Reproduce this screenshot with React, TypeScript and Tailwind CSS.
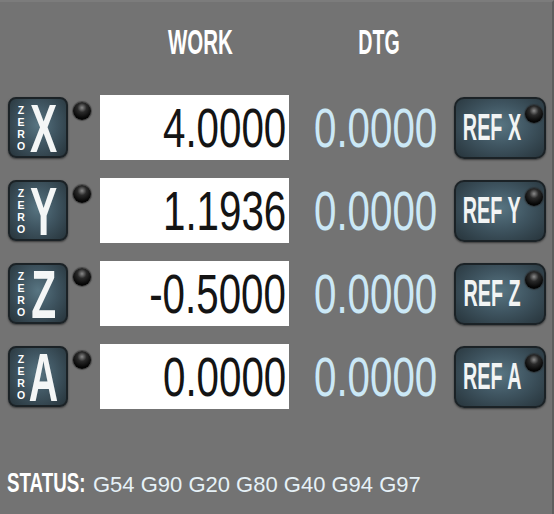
import React from 'react'

/** DRO panel — work / distance-to-go readout per axis */

const axes = [
  { axis: 'X', work: '4.0000', dtg: '0.0000' },
  { axis: 'Y', work: '1.1936', dtg: '0.0000' },
  { axis: 'Z', work: '-0.5000', dtg: '0.0000' },
  { axis: 'A', work: '0.0000', dtg: '0.0000' },
]

const narrow = "font-['Liberation_Sans',Arial,sans-serif] font-bold"
const btnBg =
  'bg-[radial-gradient(ellipse_at_50%_45%,#587582_0%,#405662_45%,#27343b_100%)] border-2 border-[#1b2226] shadow-[0_1px_2px_rgba(0,0,0,0.5)]'

function Led() {
  return (
    <div className="w-[18px] h-[18px] rounded-full bg-[radial-gradient(circle_at_50%_32%,#8a8a8a_0%,#2a2a2a_30%,#050505_70%)] shadow-[0_0_1px_1px_rgba(40,40,40,0.6)]" />
  )
}

function ZeroButton({ axis }: { axis: string }) {
  return (
    <div className={`w-[60px] h-[61px] rounded-[8px] ${btnBg} flex items-center`}>
      <div className={`flex flex-col items-center w-[10px] ml-[6px] text-[10.5px] leading-[12px] text-white ${narrow}`}>
        {'ZERO'.split('').map((c) => (
          <span key={c} className="block h-[12px]">
            {c}
          </span>
        ))}
      </div>
      <div className="w-[36px] flex justify-center">
        <span className={`inline-block text-[68px] leading-none text-[#f4f6f6] scale-x-[0.6] ${narrow}`}>{axis}</span>
      </div>
    </div>
  )
}

function RefButton({ axis }: { axis: string }) {
  return (
    <div className={`w-[92px] h-[62px] rounded-[10px] ${btnBg} flex items-center`}>
      <div className="w-[70px] flex justify-center pl-[2px]">
        <span className={`inline-block whitespace-nowrap text-[36px] leading-none text-[#f2f4f4] scale-x-[0.55] ${narrow}`}>
          REF {axis}
        </span>
      </div>
      <div className="self-start mt-[6px] ml-[-1px]">
        <Led />
      </div>
    </div>
  )
}

export default function App() {
  return (
    <div className="w-[554px] h-[514px] bg-[#737373] border-t-2 border-t-[#7c7c7c] border-r-2 border-r-[#5e5e5e] flex flex-col font-['Liberation_Sans',Arial,sans-serif]">
      <div className="h-[79px] flex items-center">
        <div className="ml-[100px] w-[201px] flex justify-center">
          <span className={`inline-block text-[35px] leading-none text-white scale-x-[0.585] ${narrow}`}>WORK</span>
        </div>
        <div className="w-[155px] flex justify-center">
          <span className={`inline-block text-[35px] leading-none text-white scale-x-[0.56] ${narrow}`}>DTG</span>
        </div>
      </div>

      <div className="mt-[14px] flex flex-col gap-[18px]">
        {axes.map((a) => (
          <div key={a.axis} className="flex pl-[8px] h-[65px]">
            <div className="mt-[2px]">
              <ZeroButton axis={a.axis} />
            </div>
            <div className="ml-[5px] mt-[7px]">
              <Led />
            </div>
            <div className="ml-[9px] w-[189px] h-[65px] bg-white flex items-center justify-end pr-[3px]">
              <span className="inline-block origin-right scale-x-[0.72] text-[56px] leading-none text-[#141414] whitespace-nowrap">
                {a.work}
              </span>
            </div>
            <div className="w-[165px] flex items-center justify-end pr-[17px]">
              <span className="inline-block origin-right scale-x-[0.72] text-[56px] leading-none text-[#cbe8f6] whitespace-nowrap">
                {a.dtg}
              </span>
            </div>
            <div className="mt-[2px]">
              <RefButton axis={a.axis} />
            </div>
          </div>
        ))}
      </div>

      <div className="mt-auto mb-[17px] h-[28px] flex items-baseline pl-[7px]">
        <div className="w-[86px]">
          <span className={`inline-block origin-left text-[28px] leading-none text-white scale-x-[0.67] ${narrow}`}>STATUS:</span>
        </div>
        <span className="text-[22px] leading-none text-[#e6f1f7] whitespace-nowrap">G54 G90 G20 G80 G40 G94 G97</span>
      </div>
    </div>
  )
}
